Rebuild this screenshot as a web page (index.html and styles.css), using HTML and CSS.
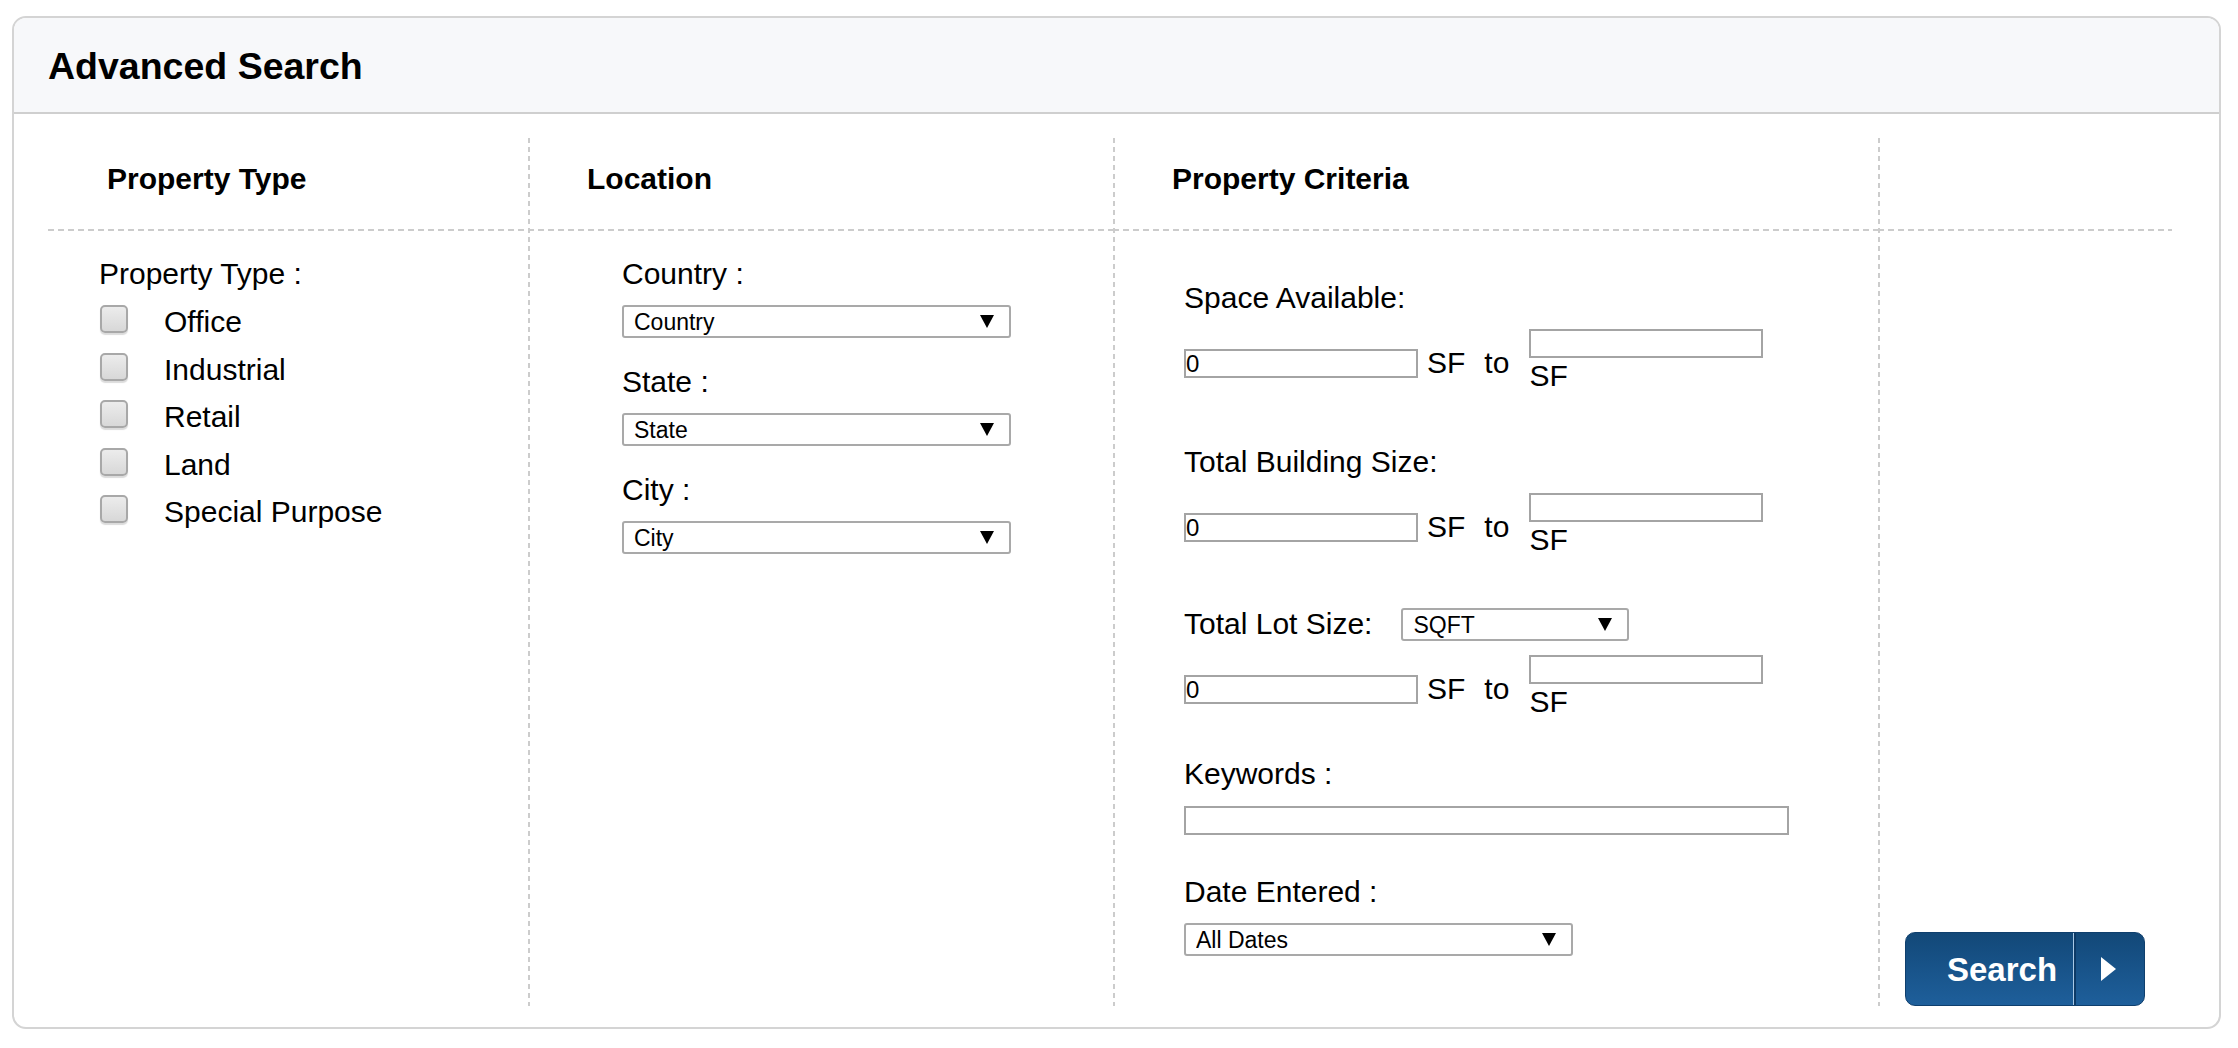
FILE: index.html
```html
<!DOCTYPE html>
<html lang="en">
<head>
<meta charset="utf-8">
<title>Advanced Search</title>
<link rel="stylesheet" href="styles.css">
</head>
<body>
<div class="panel">
  <div class="panel-head"><h1 class="title">Advanced Search</h1></div>
  <div class="cols">
    <section class="col">
      <h2 class="col-head">Property Type</h2>
      <div class="col-body body-type">
        <div class="label">Property Type :</div>
        <ul class="checks">
          <li class="check"><span class="box"></span><span class="check-label">Office</span></li>
          <li class="check"><span class="box"></span><span class="check-label">Industrial</span></li>
          <li class="check"><span class="box"></span><span class="check-label">Retail</span></li>
          <li class="check"><span class="box"></span><span class="check-label">Land</span></li>
          <li class="check"><span class="box"></span><span class="check-label">Special Purpose</span></li>
        </ul>
      </div>
    </section>
    <section class="col col-line">
      <h2 class="col-head">Location</h2>
      <div class="col-body body-loc">
        <div class="label">Country :</div>
        <div class="select-wrap loc-select">
          <select class="select"><option>Country</option></select>
          <svg class="select-arrow" width="14" height="13" viewBox="0 0 14 13"><polygon points="0,0 14,0 7,13" fill="#000"/></svg>
        </div>
        <div class="label loc-label">State :</div>
        <div class="select-wrap loc-select">
          <select class="select"><option>State</option></select>
          <svg class="select-arrow" width="14" height="13" viewBox="0 0 14 13"><polygon points="0,0 14,0 7,13" fill="#000"/></svg>
        </div>
        <div class="label loc-label">City :</div>
        <div class="select-wrap loc-select">
          <select class="select"><option>City</option></select>
          <svg class="select-arrow" width="14" height="13" viewBox="0 0 14 13"><polygon points="0,0 14,0 7,13" fill="#000"/></svg>
        </div>
      </div>
    </section>
    <section class="col col-line">
      <h2 class="col-head">Property Criteria</h2>
      <div class="col-body body-crit">
        <div class="group">
          <div class="label">Space Available:</div>
          <div class="range">
            <input class="num" type="text" value="0">
            <span class="unit">SF</span>
            <span class="to">to</span>
            <span class="range-end"><input class="num num-to" type="text" value=""><span class="unit-below">SF</span></span>
          </div>
        </div>
        <div class="group">
          <div class="label">Total Building Size:</div>
          <div class="range">
            <input class="num" type="text" value="0">
            <span class="unit">SF</span>
            <span class="to">to</span>
            <span class="range-end"><input class="num num-to" type="text" value=""><span class="unit-below">SF</span></span>
          </div>
        </div>
        <div class="group group-lot">
          <div class="label-row">
            <span class="label">Total Lot Size:</span>
            <div class="select-wrap unit-select">
              <select class="select"><option>SQFT</option></select>
              <svg class="select-arrow" width="14" height="13" viewBox="0 0 14 13"><polygon points="0,0 14,0 7,13" fill="#000"/></svg>
            </div>
          </div>
          <div class="range">
            <input class="num" type="text" value="0">
            <span class="unit">SF</span>
            <span class="to">to</span>
            <span class="range-end"><input class="num num-to" type="text" value=""><span class="unit-below">SF</span></span>
          </div>
        </div>
        <div class="group group-kw">
          <div class="label">Keywords :</div>
          <input class="keywords" type="text" value="">
        </div>
        <div class="group group-date">
          <div class="label">Date Entered :</div>
          <div class="select-wrap date-select">
            <select class="select"><option>All Dates</option></select>
            <svg class="select-arrow" width="14" height="13" viewBox="0 0 14 13"><polygon points="0,0 14,0 7,13" fill="#000"/></svg>
          </div>
        </div>
      </div>
    </section>
    <section class="col col-line">
      <div class="col-head"></div>
      <div class="col-body body-btn">
        <button class="search-btn" type="button">
          <span class="btn-label">Search</span>
          <span class="btn-sep"></span>
          <span class="btn-arrow"><svg width="15" height="24" viewBox="0 0 15 24"><polygon points="0,0 15,12 0,24" fill="#fff"/></svg></span>
        </button>
      </div>
    </section>
  </div>
</div>
</body>
</html>
```

FILE: styles.css
```css
* { box-sizing: border-box; }

body {
  margin: 0;
  background: #fff;
  font-family: "Liberation Sans", Arial, sans-serif;
  color: #000;
}

.panel {
  margin: 16px 0 0 12px;
  width: 2209px;
  height: 1013px;
  border: 2px solid #d4d4d4;
  border-radius: 14px;
  overflow: hidden;
  background: #fff;
}

.panel-head {
  height: 96px;
  background: #f7f8fa;
  border-bottom: 2px solid #cfcfcf;
  padding: 2px 0 0 34px;
}

.title {
  margin: 0;
  font-size: 37.5px;
  font-weight: 700;
  line-height: 92px;
}

.cols {
  display: grid;
  grid-template-columns: 480px 585px 765px 294px;
  margin: 24px 0 0 34px;
  height: 865px;
}

.col {
  display: flex;
  flex-direction: column;
}

.col-line {
  background: repeating-linear-gradient(to bottom, #cccccc 0 5px, transparent 5px 9px) 0 0 / 2px 100% no-repeat;
}

.col-head {
  margin: 0;
  height: 93px;
  padding: 23px 0 0 59px;
  font-size: 30px;
  font-weight: 700;
  line-height: 36px;
  background: repeating-linear-gradient(to right, #cccccc 0 6px, transparent 6px 10px) 0 100% / 100% 2px no-repeat;
}

.col-body {
  flex: 1;
}

.label {
  font-size: 30px;
  line-height: 34px;
}

/* Property type column */
.body-type {
  padding: 26px 0 0 51px;
}

.checks {
  list-style: none;
  margin: 14px 0 0 0;
  padding: 0;
}

.check {
  display: flex;
  align-items: flex-start;
  height: 47.5px;
}

.box {
  width: 28px;
  height: 28px;
  margin: 0 36px 0 1px;
  border: 2px solid #a8a8a8;
  border-radius: 5px;
  background: linear-gradient(#ececec, #d8d8d8);
  box-shadow: 0 2px 1px rgba(0, 0, 0, 0.14);
}

.check-label {
  font-size: 30px;
  line-height: 34px;
}

/* Selects */
.select-wrap {
  position: relative;
  height: 33px;
}

.select {
  -webkit-appearance: none;
  appearance: none;
  display: block;
  width: 100%;
  height: 100%;
  margin: 0;
  padding: 0 0 0 10px;
  border: 2px solid #a9a9a9;
  border-radius: 3px;
  background: #fff;
  color: #000;
  font-family: "Liberation Sans", Arial, sans-serif;
  font-size: 23px;
}

.select-arrow {
  position: absolute;
  right: 17px;
  top: 10px;
  pointer-events: none;
}

/* Location column */
.body-loc {
  padding: 26px 0 0 94px;
}

.loc-select {
  width: 389px;
  margin-top: 14px;
}

.loc-label {
  margin-top: 27px;
}

/* Criteria column */
.body-crit {
  padding: 50px 0 0 71px;
}

.group + .group {
  margin-top: 52px;
}

.group-lot.group {
  margin-top: 50px;
}

.group-kw.group {
  margin-top: 38px;
}

.group-date.group {
  margin-top: 40px;
}

.label-row {
  display: flex;
  align-items: flex-start;
}

.unit-select {
  width: 228px;
  margin: 1px 0 0 29px;
}

.range {
  display: flex;
  align-items: flex-start;
  margin-top: 14px;
}

.num,
.keywords {
  display: block;
  height: 29px;
  margin: 0;
  padding: 0;
  border: 2px solid #a4a4a4;
  border-radius: 0;
  background: #fff;
  font-family: "Liberation Sans", Arial, sans-serif;
  font-size: 24px;
  color: #000;
}

.num {
  width: 234px;
  margin-top: 20px;
}

.num-to {
  margin-top: 0;
}

.unit,
.to,
.unit-below {
  font-size: 30px;
  line-height: 34px;
}

.unit {
  margin: 17px 0 0 9px;
}

.to {
  margin: 17px 0 0 19px;
}

.range-end {
  display: flex;
  flex-direction: column;
  margin-left: 20px;
}

.unit-below {
  margin-top: 1px;
}

.keywords {
  width: 605px;
  margin-top: 15px;
}

.date-select {
  width: 389px;
  margin-top: 14px;
}

/* Button column */
.body-btn {
  padding: 701px 0 0 27px;
}

.search-btn {
  display: flex;
  width: 240px;
  height: 74px;
  margin: 0;
  padding: 0;
  border: 1px solid #0f3f6d;
  border-radius: 10px;
  overflow: hidden;
  background: linear-gradient(#124878, #1e5f9b);
  color: #fff;
  cursor: pointer;
}

.btn-label {
  width: 167px;
  padding: 2px 0 0 41px;
  text-align: left;
  font-family: "Liberation Sans", Arial, sans-serif;
  font-size: 33px;
  font-weight: 700;
  line-height: 70px;
}

.btn-sep {
  width: 3px;
  height: 100%;
  background: linear-gradient(to right, #a9c9e6 0 1px, #0d3a66 1px 3px);
}

.btn-arrow {
  flex: 1;
  display: flex;
  align-items: center;
  justify-content: center;
  padding-right: 4px;
}
```
